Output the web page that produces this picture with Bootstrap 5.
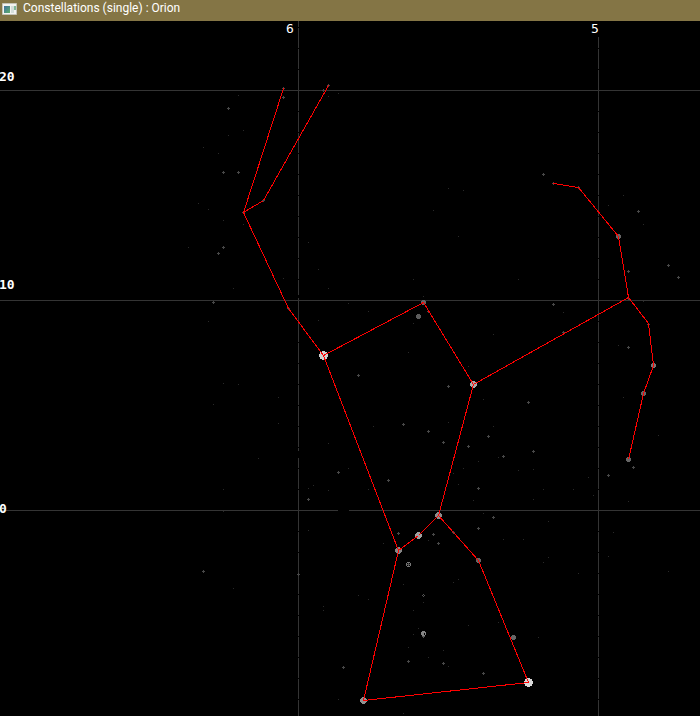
<!DOCTYPE html>
<html lang="en">
<head>
<meta charset="utf-8">
<meta name="viewport" content="width=device-width, initial-scale=1">
<title>Constellations (single) : Orion</title>
<link rel="stylesheet" href="https://cdn.jsdelivr.net/npm/bootstrap@5.3.0/dist/css/bootstrap.min.css">
<style>
  body { background: #000; }
  .titlebar { background: #847545; min-height: 21px; padding: 0 2px 4px; gap: 5px; }
  .titlebar h1 { font: 12px/17px Roboto, "Open Sans", sans-serif; color: #fff; }
  .chart { width: 100%; height: auto; }
  .chart text { font: bold 13px "DejaVu Sans Mono", monospace; fill: #fff; }
  .chart .hour { font-weight: normal; }
  .grid { stroke: #343434; fill: none; }
  .figure-lines { stroke: #f00; fill: none; }
  .dots { fill: none; stroke: none; marker-start: url(#dot); marker-mid: url(#dot); marker-end: url(#dot); }
  .pluses { fill: none; stroke: none; marker-start: url(#plus); marker-mid: url(#plus); marker-end: url(#plus); }
</style>
</head>
<body class="overflow-hidden">
<header class="titlebar d-flex align-items-center">
  <svg width="16" height="14" viewBox="0 0 16 14" aria-hidden="true">
    <defs><linearGradient id="pane" x1="0" y1="0" x2="1" y2="1"><stop stop-color="#3f6fa0"/><stop offset="1" stop-color="#5fb069"/></linearGradient></defs>
    <path fill="#f3f3f0" stroke="#c4c3b8" d="M.5 1.500h14v11H.5z"/>
    <path fill="url(#pane)" d="M2 4h6v7H2z"/>
    <path fill="#d5dedb" d="M9 4h3v7H9z"/><path fill="#80b798" d="M12 4h2v4h-2z"/>
  </svg>
  <h1 class="m-0 text-truncate">Constellations (single) : Orion</h1>
</header>
<main>
<svg class="chart d-block" viewBox="0 21 700 695" role="img" aria-label="Star chart of Orion">
  <defs>
    <marker id="dot" markerUnits="userSpaceOnUse" markerWidth="1" markerHeight="1" refX="0.5" refY="0.5"><path fill="#292929" d="M0 0h1v1H0z"/></marker>
    <marker id="plus" markerUnits="userSpaceOnUse" markerWidth="3" markerHeight="3" refX="1.5" refY="1.5"><path fill="#484848" d="M1 0h1v1h1v1h-1v1h-1v-1h-1v-1h1z"/></marker>
    <path id="star-s" d="M-1.500 -2.500h3v1h1v3h-1v1h-3v-1h-1v-3h1z"/>
    <path id="star-m" d="M-1.500 -3.500h3v1h1v1h1v3h-1v1h-1v1h-3v-1h-1v-1h-1v-3h1v-1h1z"/>
    <path id="star-l" d="M-1.500 -4.500h3v1h2v2h1v3h-1v2h-2v1h-3v-1h-2v-2h-1v-3h1v-2h2z"/>
  </defs>
  <g transform="translate(.5 .5)" shape-rendering="crispEdges">
    <g class="grid">
      <path stroke-dasharray="20 1" stroke-dashoffset="14.500" d="M298 20.500V716"/>
      <path stroke-dasharray="20 1" stroke-dashoffset="9" d="M598 36.500V716"/>
      <path d="M-1 90H700M-1 300H700M-1 510H337.500M348.500 510H700"/>
      <path stroke="#000" d="M298 294.500v3M298 450.500v7"/>
    </g>
    <polyline class="dots" points="238,95 243,130 228,135 203,147 218,153 198,203 208,209 223,220 243,224 328,96 338,93 623,195 608,205 643,224 188,247 308,242 283,278 318,269 233,288 328,288 348,303 318,320 208,321 223,383 238,384 278,397 213,404 278,423 328,443 258,458 458,236 413,279 518,279 423,296 368,311 413,323 493,334 408,352 468,366 483,399 373,426 448,422 493,426 498,457 563,312 643,301 618,345 623,397 658,435 533,469 588,477 543,489 573,489 448,188 463,190 433,210"/>
    <polyline class="dots" points="348,468 313,485 308,488 328,490 223,489 223,511 308,530 233,588 323,606 323,610 358,595 338,699 463,468 453,473 478,461 518,470 458,484 473,500 368,489 483,513 548,521 428,540 503,539 523,539 383,543 543,562 458,579 453,582 403,584 368,599 423,602 413,610 418,628 413,634 468,625 498,622 538,637 408,647 443,650 428,657 448,666 403,713 533,499 593,495 628,501 613,532 608,556 548,557 578,573 668,571"/>
    <polyline class="pluses" points="283,88 283,97 323,90 328,85 228,108 223,172 238,172 263,200 243,212 543,174 553,183 578,187 638,211 223,247 218,253 213,302 288,308 358,375 428,311 448,386 403,424 428,431 443,442 468,446 488,436 503,456 528,402 628,271 668,265 678,277 553,304 563,332 628,347 648,324 628,298 533,451 633,467 608,475 338,472 308,499 203,571 298,574 343,667 388,480 478,488 493,517 478,528 398,533 433,534 438,543 453,532 408,661 443,663 483,673"/>
    <g>
      <use href="#star-l" x="323" y="355" fill="#d0d0d0"/>
      <use href="#star-m" x="473" y="384" fill="#aaa"/>
      <use href="#star-l" x="528" y="682" fill="#d8d8d8"/>
      <use href="#star-m" x="438" y="515" fill="#8c8c8c"/>
      <use href="#star-m" x="418" y="535" fill="#a0a0a0"/>
      <use href="#star-m" x="398" y="550" fill="#858585"/>
      <use href="#star-m" x="363" y="700" fill="#929292"/>
      <g fill="#666">
        <use href="#star-s" x="423" y="302"/><use href="#star-s" x="418" y="316" fill="#5c5c5c"/>
        <use href="#star-s" x="478" y="560"/><use href="#star-s" x="513" y="637"/>
        <use href="#star-s" x="618" y="236"/><use href="#star-s" x="653" y="365" fill="#777"/>
        <use href="#star-s" x="643" y="393"/><use href="#star-s" x="628" y="459"/>
      </g>
      <use href="#star-s" x="408" y="564" fill="#777"/><path fill="#000" d="M406.500 562.500h3v3h-3z"/><path fill="#555" d="M407.500 562.500h1v1h1v1h-1v1h-1v-1h-1v-1h1z"/>
      <path fill="#555" d="M422.500 593.500h1v1h1v1h-1v1h-1v-1h-1v-1h1z"/><path fill="#000" d="M422.500 594.500h1v1h-1z"/>
      <use href="#star-s" x="423" y="633" fill="#858585"/><path fill="#000" d="M423.500 632.500h1v2h-1z"/><path fill="#555" d="M421.500 635.500h3v1h-1v1h-1v-1h-1z"/>
    </g>
    <g class="figure-lines">
      <path d="M283 88L243 212L263 200L328 85"/>
      <path d="M243 212L288 308L323 355L423 302L473 384L628 297"/>
      <path d="M553 183L578 187L618 236L628 297L648 323L653 365L643 393L628 459"/>
      <path d="M473 384L438 515L478 560L528 682L363 700L398 550L323 355"/>
      <path d="M398 550L418 535L438 515"/>
    </g>
  </g>
  <text x="-1" y="81">20</text>
  <text x="-1" y="289">10</text>
  <text x="-1" y="513">0</text>
  <text class="hour" x="286" y="33">6</text>
  <text class="hour" x="591" y="33">5</text>
</svg>
</main>
<script src="https://cdn.jsdelivr.net/npm/bootstrap@5.3.0/dist/js/bootstrap.bundle.min.js"></script>
</body>
</html>
